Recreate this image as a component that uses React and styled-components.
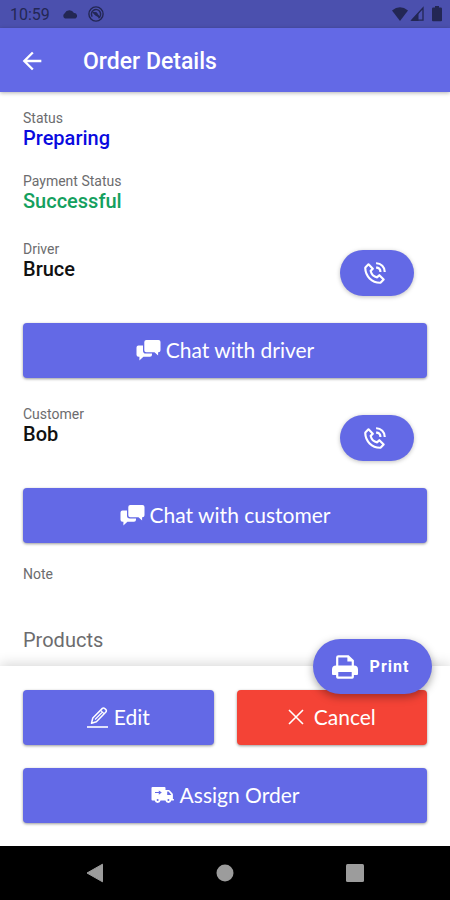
import styled, { createGlobalStyle } from 'styled-components'
import { BiPhoneCall } from 'react-icons/bi'
import { MdArrowBack } from 'react-icons/md'

const colors = {
  primary: '#6369e6',
  primaryDark: '#4b50ae',
  danger: '#f44336',
  statusIcon: '#232754',
  label: '#6c6c6e'
}

const GlobalStyle = createGlobalStyle`
  * {
    box-sizing: border-box;
  }
  body {
    margin: 0;
    background: #fff;
    font-family: Roboto, sans-serif;
  }
  button {
    border: none;
    color: #fff;
    cursor: pointer;
  }
`

const ChatIcon = () => (
  <svg width='25' height='22' viewBox='0 0 25 22' fill='currentColor' aria-hidden='true'>
    <path d='M10.3 1H22.5a2 2 0 0 1 2 2v8.2a2 2 0 0 1-2 2h-.4v3.3l-3.6-3.3h-8.2a2 2 0 0 1-2-2V3a2 2 0 0 1 2-2z' />
    <path d='M7 6.5H2.5a2 2 0 0 0-2 2v7.3a2 2 0 0 0 2 2h.9v3.7l4-3.700H14a2 2 0 0 0 2-2v-1.3H9.8A2.8 2.8 0 0 1 7 11.7z' />
  </svg>
)

const EditIcon = () => (
  <svg width='21' height='22' viewBox='0 0 21 22' fill='none' stroke='currentColor' strokeLinejoin='round' aria-hidden='true'>
    <path d='M4.5 17.3l1.3-5.3L15.400 2.400a1.600 1.600 0 0 1 2.300 0l1.200 1.200a1.600 1.600 0 0 1 0 2.300L9.400 15.700z' strokeWidth='1.5' />
    <path d='M13.600 4.300l3.400 3.400M8 13.500l7-7' strokeWidth='1.2' />
    <path d='M0 21h21' strokeWidth='1.6' />
  </svg>
)

const CloseIcon = () => (
  <svg width='16' height='16' viewBox='0 0 16 16' fill='none' aria-hidden='true'>
    <path d='M1 1l14 14M15 1L1 15' stroke='currentColor' strokeWidth='1.6' />
  </svg>
)

const TruckIcon = () => (
  <svg width='23' height='18' viewBox='0 0 23 18' fill='currentColor' aria-hidden='true'>
    <path
      fillRule='evenodd'
      d='M1.5 1H13.5a1 1 0 0 1 1 1V4h3.2a1.5 1.5 0 0 1 1.1.5l2.7 3.1a1.5 1.5 0 0 1 .4 1V13h1v1.5h-2.6a3 3 0 0 1-5.9 0H9.6a3 3 0 0 1-5.9 0H1.5a1 1 0 0 1-1-1V2a1 1 0 0 1 1-1zM16.2 5.5V9h4.2l-2.8-3.5zM7.8 4.4v1.7H4v1h3.8v1.7l3-2.2zM6.65 13a1 1 0 1 0 0 2 1 1 0 0 0 0-2zM17.4 13a1 1 0 1 0 0 2 1 1 0 0 0 0-2z'
    />
  </svg>
)

const PrintIcon = () => (
  <svg width='26' height='24' viewBox='0 0 26 24' fill='none' aria-hidden='true'>
    <path d='M5.2 12V2.6a1.2 1.2 0 0 1 1.2-1.2h9.8l4.6 4.4V12' stroke='currentColor' strokeWidth='2.2' />
    <path d='M15.4 1v5.6h5.8z' fill='currentColor' />
    <path d='M4 10.5h18a4 4 0 0 1 4 4V19a1 1 0 0 1-1 1H1a1 1 0 0 1-1-1v-4.5a4 4 0 0 1 4-4z' fill='currentColor' />
    <rect x='5.2' y='16' width='15.6' height='6.7' rx='.6' fill={colors.primary} stroke='currentColor' strokeWidth='2.2' />
  </svg>
)

const Person = ({ role, name, chatText }) => (
  <>
    <PersonRow>
      <div>
        <Label>{role}</Label>
        <Value>{name}</Value>
      </div>
      <CallButton type='button' aria-label={`Call ${name}`}>
        <BiPhoneCall size={26} />
      </CallButton>
    </PersonRow>
    <Button type='button'>
      <ChatIcon />
      {chatText}
    </Button>
  </>
)

const App = () => {
  return (
    <Screen>
      <GlobalStyle />
      <StatusBar>
        <StatusGroup>
          <span>10:59</span>
          <svg width='16' height='16' viewBox='0 0 16 16' fill='currentColor' aria-hidden='true'>
            <path d='M3 12.5a3 3 0 0 1-.3-5.3A5.3 5.3 0 0 1 12 7a2.9 2.9 0 0 1 1.5 5.5z' />
          </svg>
          <svg width='16' height='16' viewBox='0 0 16 16' fill='none' stroke='currentColor' aria-hidden='true'>
            <circle cx='8' cy='8' r='7.1' strokeWidth='1.4' />
            <path d='M4.2 10.7A4.6 4.6 0 1 1 10.5 12' strokeWidth='1.5' />
            <path d='M5 6.5l3.5.2 3 4.5-4-2z' fill='currentColor' />
          </svg>
        </StatusGroup>
        <StatusGroup $tight>
          <svg width='16' height='16' viewBox='0 0 16 16' fill='currentColor' aria-hidden='true'>
            <path d='M0 4.5Q8-2 16 4.5L8 15z' />
          </svg>
          <svg width='14' height='16' viewBox='0 0 14 16' aria-hidden='true'>
            <path d='M1.8 14.2H13V2z' fill='none' stroke='currentColor' strokeWidth='1.3' />
            <path d='M1 15L8.5 7v8z' fill='currentColor' />
          </svg>
          <BatteryIcon viewBox='0 0 10 16' fill='currentColor' aria-hidden='true'>
            <path d='M3 0h4v1.5h1.7A1.3 1.3 0 0 1 10 2.8v11.4a1 1 0 0 1-1 1H1a1 1 0 0 1-1-1V2.8a1.3 1.3 0 0 1 1.3-1.3H3z' />
          </BatteryIcon>
        </StatusGroup>
      </StatusBar>

      <AppBar>
        <BackButton type='button' aria-label='Back'>
          <MdArrowBack size={28} />
        </BackButton>
        <Title>Order Details</Title>
      </AppBar>

      <Content>
        <Field>
          <Label>Status</Label>
          <Value $color='#0a0adf'>Preparing</Value>
        </Field>
        <Field>
          <Label>Payment Status</Label>
          <Value $color='#14a05e'>Successful</Value>
        </Field>
        <Person role='Driver' name='Bruce' chatText='Chat with driver' />
        <Person role='Customer' name='Bob' chatText='Chat with customer' />
        <Note>Note</Note>
        <SectionTitle>Products</SectionTitle>
      </Content>

      <Actions>
        <PrintButton type='button'>
          <PrintIcon />
          Print
        </PrintButton>
        <Button type='button' $gap='6px'>
          <EditIcon />
          Edit
        </Button>
        <Button type='button' $danger $gap='10px'>
          <CloseIcon />
          Cancel
        </Button>
        <Button type='button' $wide $gap='6px'>
          <TruckIcon />
          Assign Order
        </Button>
      </Actions>

      <NavBar>
        <NavButton type='button' aria-label='Back'>
          <svg width='20' height='20' viewBox='0 0 20 20' aria-hidden='true'>
            <path d='M2 10L17.5 1.2v17.6z' fill='currentColor' stroke='currentColor' strokeLinejoin='round' />
          </svg>
        </NavButton>
        <NavButton type='button' aria-label='Home'>
          <svg width='20' height='20' viewBox='0 0 20 20' aria-hidden='true'>
            <circle cx='10' cy='10' r='8.5' fill='currentColor' />
          </svg>
        </NavButton>
        <NavButton type='button' aria-label='Recent apps'>
          <svg width='20' height='20' viewBox='0 0 20 20' aria-hidden='true'>
            <rect x='1' y='1' width='18' height='18' rx='1.5' fill='currentColor' />
          </svg>
        </NavButton>
      </NavBar>
    </Screen>
  )
}

export default App

const Screen = styled.div`
  min-height: 100vh;
  display: flex;
  flex-direction: column;
`
const StatusBar = styled.div`
  height: 28px;
  padding: 0 8px 0 10px;
  display: flex;
  align-items: center;
  justify-content: space-between;
  background: ${colors.primaryDark};
  color: ${colors.statusIcon};
  font-size: 16px;
`
const StatusGroup = styled.div`
  display: flex;
  align-items: center;
  gap: ${({ $tight }) => ($tight ? '2px' : '12px')};
  svg + svg {
    margin-left: ${({ $tight }) => ($tight ? '0' : '-2px')};
  }
`
const BatteryIcon = styled.svg`
  width: 10px;
  height: 16px;
  && {
    margin-left: 6px;
  }
`
const AppBar = styled.header`
  height: 64px;
  padding: 2px 18px 0;
  display: flex;
  align-items: center;
  gap: 37px;
  background: ${colors.primary};
  color: #fff;
  box-shadow: 0 1px 4px rgba(0, 0, 0, 0.3);
`
const BackButton = styled.button`
  display: flex;
  padding: 0;
  background: none;
`
const Title = styled.h1`
  margin: 0;
  font-size: 23px;
  font-weight: 500;
`
const Content = styled.main`
  flex: 1;
  display: flex;
  flex-direction: column;
  padding: 17px 23px 14px;
`
const Field = styled.div`
  margin-bottom: 23px;
`
const Label = styled.div`
  font-size: 14px;
  line-height: 18px;
  color: ${colors.label};
`
const Value = styled.div`
  font-size: 20px;
  line-height: 22px;
  font-weight: 500;
  color: ${({ $color }) => $color || '#111'};
`
const PersonRow = styled.div`
  display: flex;
  align-items: flex-start;
  justify-content: space-between;
  padding: 5px 13px 0 0;
  margin-bottom: 27px;
`
const CallButton = styled.button`
  width: 74px;
  height: 46px;
  margin-top: 10px;
  padding: 0 4px 0 0;
  display: flex;
  align-items: center;
  justify-content: center;
  border-radius: 23px;
  background: ${colors.primary};
  box-shadow: 0 1px 4px rgba(0, 0, 0, 0.25);
`
const Button = styled.button`
  height: 55px;
  padding: 0 0 2px;
  display: flex;
  align-items: center;
  justify-content: center;
  gap: ${({ $gap }) => $gap || '5px'};
  grid-column: ${({ $wide }) => ($wide ? '1 / -1' : 'auto')};
  border-radius: 4px;
  background: ${({ $danger }) => ($danger ? colors.danger : colors.primary)};
  box-shadow: 0 1px 3px rgba(0, 0, 0, 0.4);
  font-family: Lato, sans-serif;
  font-size: 21px;
  ${PersonRow} + & {
    margin-bottom: 22px;
  }
`
const Note = styled(Label)`
  margin-bottom: 46px;
`
const SectionTitle = styled.h2`
  margin: 0;
  font-size: 20px;
  line-height: 22px;
  font-weight: 400;
  color: ${colors.label};
`
const Actions = styled.footer`
  position: relative;
  display: grid;
  grid-template-columns: 1fr 1fr;
  gap: 23px;
  padding: 24px 23px 23px;
  background: #fff;
  box-shadow: 0 -2px 12px rgba(0, 0, 0, 0.16);
`
const PrintButton = styled.button`
  position: absolute;
  top: -27px;
  right: 18px;
  width: 119px;
  height: 55px;
  padding: 0 4px 0 0;
  display: flex;
  align-items: center;
  justify-content: center;
  gap: 12px;
  border-radius: 28px;
  background: ${colors.primary};
  box-shadow: 0 3px 8px rgba(0, 0, 0, 0.35);
  font-family: Roboto, sans-serif;
  font-size: 16px;
  font-weight: 700;
  letter-spacing: 1px;
`
const NavBar = styled.nav`
  height: 54px;
  padding: 0 30px;
  display: grid;
  grid-template-columns: repeat(3, 1fr);
  background: #000;
`
const NavButton = styled.button`
  display: flex;
  align-items: center;
  justify-content: center;
  padding: 0;
  background: none;
  && {
    color: #9c9c9c;
  }
`
